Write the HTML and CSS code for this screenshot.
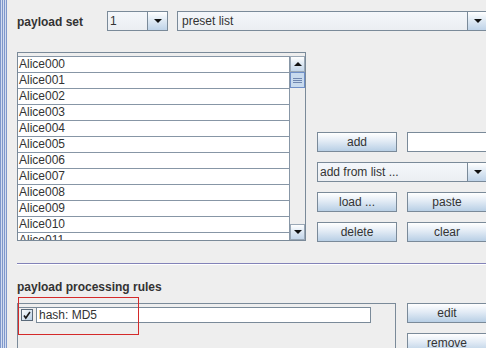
FILE: index.html
```html
<!DOCTYPE html>
<html lang="en">
<head>
  <meta charset="UTF-8">
  <meta name="viewport" content="width=device-width, initial-scale=1.0">
  <title>Payloads</title>
  <link rel="stylesheet" href="styles.css">
</head>
<body>
  <div class="page">
    <div class="stripe"></div>
    <div class="main">

      <div class="set-row">
        <span class="label set-label">payload set</span>
        <div class="combo combo-num">
          <span class="combo-value">1</span>
          <span class="combo-arrow"><svg width="8" height="4" viewBox="0 0 8 4"><polygon points="0,0 8,0 4,4" fill="#111"/></svg></span>
        </div>
        <div class="combo combo-type">
          <span class="combo-value">preset list</span>
          <span class="combo-arrow"><svg width="8" height="4" viewBox="0 0 8 4"><polygon points="0,0 8,0 4,4" fill="#111"/></svg></span>
        </div>
      </div>

      <div class="list-row">
        <div class="scroll">
          <div class="list">
            <div class="item">Alice000</div>
            <div class="item">Alice001</div>
            <div class="item">Alice002</div>
            <div class="item">Alice003</div>
            <div class="item">Alice004</div>
            <div class="item">Alice005</div>
            <div class="item">Alice006</div>
            <div class="item">Alice007</div>
            <div class="item">Alice008</div>
            <div class="item">Alice009</div>
            <div class="item">Alice010</div>
            <div class="item">Alice011</div>
            <div class="item">Alice012</div>
          </div>
          <div class="vbar">
            <div class="vbar-btn"><svg width="8" height="4" viewBox="0 0 8 4"><polygon points="0,4 8,4 4,0" fill="#111"/></svg></div>
            <div class="vbar-thumb"><span></span><span></span><span></span></div>
            <div class="vbar-track"></div>
            <div class="vbar-btn"><svg width="8" height="4" viewBox="0 0 8 4"><polygon points="0,0 8,0 4,4" fill="#111"/></svg></div>
          </div>
        </div>

        <div class="actions">
          <div class="action-row">
            <button>add</button>
            <input type="text" class="field">
          </div>
          <div class="combo combo-wide">
            <span class="combo-value">add from list ...</span>
            <span class="combo-arrow"><svg width="8" height="4" viewBox="0 0 8 4"><polygon points="0,0 8,0 4,4" fill="#111"/></svg></span>
          </div>
          <div class="action-row">
            <button>load ...</button>
            <button>paste</button>
          </div>
          <div class="action-row">
            <button>delete</button>
            <button>clear</button>
          </div>
        </div>
      </div>

      <div class="separator"></div>

      <div class="label section-label">payload processing rules</div>

      <div class="rules-row">
        <div class="rules">
          <div class="rule">
            <span class="rule-check">
              <svg width="12" height="12" viewBox="0 0 12 12">
                <defs>
                  <linearGradient id="cb" x1="0" y1="0" x2="1" y2="1">
                    <stop offset="0" stop-color="#ffffff"/>
                    <stop offset="1" stop-color="#b8cfe5"/>
                  </linearGradient>
                </defs>
                <rect x="0.5" y="0.5" width="11" height="11" fill="url(#cb)" stroke="#5a6a7a"/>
                <path d="M3 6.5 L4.8 9 L9 3" fill="none" stroke="#1a1a1a" stroke-width="1.6"/>
              </svg>
            </span>
            <span class="rule-text">hash: MD5</span>
          </div>
          <div class="highlight"></div>
        </div>
        <div class="actions rule-actions">
          <button>edit</button>
          <button>remove</button>
        </div>
      </div>

    </div>
  </div>
</body>
</html>
```

FILE: styles.css
```css
body {
  margin: 0;
  background-color: #eeeeee;
  font-family: 'Liberation Sans', Arial, sans-serif;
  font-size: 12px;
  color: #333;
  overflow: hidden;
}
.page {
  display: flex;
  height: 348px;
  overflow: hidden;
}
.stripe {
  width: 7px;
  flex: none;
  background: repeating-linear-gradient(to right, #7f97cb 0 1px, #d3ddf0 1px 2px);
}
.main {
  flex: 1;
  min-width: 0;
  padding-left: 10px;
  overflow: hidden;
}
.label {
  font-weight: bold;
  line-height: 14px;
}

/* payload set row */
.set-row {
  display: flex;
  margin-top: 11px;
  height: 20px;
}
.set-label {
  width: 90px;
  flex: none;
  padding-top: 4px;
}
.combo {
  display: flex;
  height: 20px;
  box-sizing: border-box;
  border: 1px solid #7a8a99;
  background: linear-gradient(#f4f7fb, #ebeef2);
}
.combo-value {
  flex: 1;
  min-width: 0;
  padding-left: 4px;
  line-height: 18px;
  white-space: nowrap;
  overflow: hidden;
}
.combo-arrow {
  width: 19px;
  flex: none;
  border-left: 1px solid #7a8a99;
  background: linear-gradient(#ffffff, #dde8f3 50%, #bfd3e8);
  display: flex;
  align-items: center;
  justify-content: center;
}
.combo-num {
  width: 61px;
  flex: none;
  margin-right: 9px;
}
.combo-num .combo-value {
  padding-left: 2px;
}
.combo-type {
  flex: 1;
  margin-right: -2px;
}

/* list */
.list-row {
  display: flex;
  margin-top: 21px;
}
.scroll {
  width: 289px;
  height: 189px;
  flex: none;
  box-sizing: border-box;
  border: 1px solid #7a8a99;
  padding-top: 3px;
  display: flex;
  background-color: #eeeeee;
}
.list {
  flex: 1;
  overflow: hidden;
}
.item {
  height: 15px;
  line-height: 15px;
  padding-left: 1px;
  border-top: 1px solid #8796a6;
  border-right: 1px solid #8796a6;
  background-color: #fff;
  white-space: nowrap;
}
.vbar {
  width: 15px;
  flex: none;
  display: flex;
  flex-direction: column;
}
.vbar-btn {
  height: 16px;
  box-sizing: border-box;
  border: 1px solid #9aa8b6;
  background: linear-gradient(#ffffff, #dde8f3 50%, #c4d6ea);
  display: flex;
  align-items: center;
  justify-content: center;
}
.vbar-thumb {
  height: 16px;
  box-sizing: border-box;
  border: 1px solid #6f8fc8;
  background-color: #c8daee;
  display: flex;
  flex-direction: column;
  align-items: center;
  justify-content: center;
  gap: 1px;
}
.vbar-thumb span {
  width: 9px;
  height: 1px;
  background-color: #6f86b0;
}
.vbar-track {
  flex: 1;
  background-color: #eeeeee;
}

/* right buttons */
.actions {
  flex: 1;
  min-width: 0;
  display: flex;
  flex-direction: column;
  gap: 10px;
  margin-left: 11px;
  padding-top: 80px;
}
.action-row {
  display: flex;
  gap: 10px;
}
button {
  width: 80px;
  height: 20px;
  flex: none;
  padding: 0;
  font: inherit;
  color: #333;
  line-height: 18px;
  border: 1px solid #7a8a99;
  background: linear-gradient(#ffffff, #e2ebf5 45%, #b8cfe5);
}
.field {
  width: 80px;
  height: 20px;
  flex: none;
  box-sizing: border-box;
  border: 1px solid #7a8a99;
  background-color: #fff;
  padding: 0;
}
.combo-wide {
  width: calc(100% + 2px);
}
.combo-wide .combo-value {
  padding-left: 2px;
}

/* processing rules */
.separator {
  margin-top: 21px;
  height: 1px;
  border-top: 1px solid #8282b8;
  background-color: #ffffff;
}
.section-label {
  margin-top: 15px;
}
.rules-row {
  display: flex;
  margin-top: 9px;
}
.rules {
  position: relative;
  width: 379px;
  height: 60px;
  flex: none;
  box-sizing: border-box;
  border: 1px solid #7a8a99;
  border-bottom: none;
  padding-top: 3px;
}
.rule {
  display: flex;
}
.rule-check {
  width: 18px;
  height: 15px;
  border-top: 1px solid #7a8a99;
  padding: 1px 0 0 3px;
  box-sizing: border-box;
}
.rule-check svg {
  display: block;
}
.rule-text {
  width: 335px;
  height: 16px;
  box-sizing: border-box;
  border: 1px solid #7a8a99;
  background-color: #fff;
  line-height: 14px;
  padding-left: 2px;
}
.highlight {
  position: absolute;
  left: 0;
  top: -7px;
  width: 121px;
  height: 38px;
  box-sizing: border-box;
  border: 1px solid #d42a2a;
}
.rule-actions {
  padding-top: 0;
}
```
